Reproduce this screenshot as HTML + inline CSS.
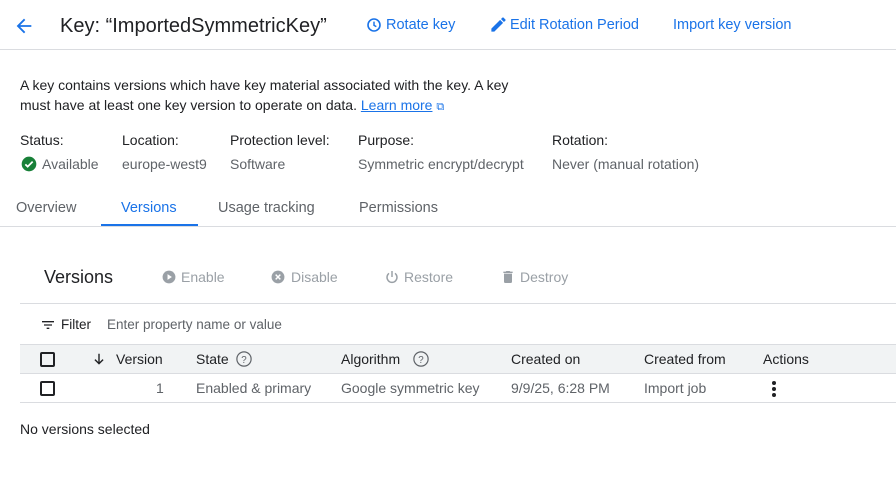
<!DOCTYPE html>
<html><head><style>
*{box-sizing:border-box;margin:0;padding:0}
body{width:896px;height:490px;background:#fff;font-family:"Liberation Sans",Arial,sans-serif;color:#202124;position:relative;overflow:hidden}
.a{position:absolute;white-space:nowrap}
.blue{color:#1a73e8}
.g{color:#5f6368}
.d{color:#9aa0a6}
.hl{position:absolute;height:1px;background:#dadce0}
.cb{position:absolute;width:15px;height:15px;border:2px solid #202124;border-radius:2px}
</style></head><body>
<svg class="a" style="left:13px;top:15px" width="22" height="22" viewBox="0 0 24 24"><path d="M20 11H7.83l5.59-5.59L12 4l-8 8 8 8 1.41-1.41L7.83 13H20v-2z" fill="#1a73e8"/></svg>
<div class="a" style="left:60px;top:15px;font-size:20px">Key: “ImportedSymmetricKey”</div>
<svg class="a" style="left:366px;top:17px" width="16" height="16" viewBox="0 0 24 24"><circle cx="12" cy="12" r="9" fill="none" stroke="#1a73e8" stroke-width="2.4"/><path d="M12 7v5.5l3.5 2" fill="none" stroke="#1a73e8" stroke-width="2.2"/></svg>
<div class="a blue" style="left:386px;top:17px;font-size:14.5px">Rotate key</div>
<svg class="a" style="left:489px;top:15px" width="19" height="19" viewBox="0 0 24 24"><path d="M3 17.25V21h3.75L17.81 9.94l-3.75-3.75L3 17.25zM20.71 7.04a1 1 0 000-1.41l-2.34-2.34a1 1 0 00-1.41 0l-1.83 1.83 3.75 3.75 1.83-1.83z" fill="#1a73e8"/></svg>
<div class="a blue" style="left:510px;top:17px;font-size:14.5px">Edit Rotation Period</div>
<div class="a blue" style="left:673px;top:17px;font-size:14.5px">Import key version</div>
<div class="hl" style="left:0;top:49px;width:896px"></div>
<div class="a" style="left:20px;top:75px;font-size:14px;line-height:20px">A key contains versions which have key material associated with the key. A key<br>must have at least one key version to operate on data. <span class="blue" style="text-decoration:underline">Learn more</span> <span class="blue" style="font-size:11px">&#x29C9;</span></div>
<div class="a" style="left:20px;top:132px;font-size:14px">Status:</div>
<div class="a" style="left:122px;top:132px;font-size:14px">Location:</div>
<div class="a" style="left:230px;top:132px;font-size:14px">Protection level:</div>
<div class="a" style="left:358px;top:132px;font-size:14px">Purpose:</div>
<div class="a" style="left:552px;top:132px;font-size:14px">Rotation:</div>
<svg class="a" style="left:21px;top:156px" width="16" height="16" viewBox="0 0 24 24"><circle cx="12" cy="12" r="11" fill="#188038"/><path d="M6.5 12.5l3.5 3.5 7.5-7.5" fill="none" stroke="#fff" stroke-width="2.6"/></svg>
<div class="a g" style="left:42px;top:156px;font-size:14px">Available</div>
<div class="a g" style="left:122px;top:156px;font-size:14px">europe-west9</div>
<div class="a g" style="left:230px;top:156px;font-size:14px">Software</div>
<div class="a g" style="left:358px;top:156px;font-size:14px">Symmetric encrypt/decrypt</div>
<div class="a g" style="left:552px;top:156px;font-size:14px">Never (manual rotation)</div>
<div class="a g" style="left:16px;top:200px;font-size:14.5px">Overview</div>
<div class="a blue" style="left:121px;top:200px;font-size:14.5px">Versions</div>
<div class="a g" style="left:218px;top:200px;font-size:14.5px">Usage tracking</div>
<div class="a g" style="left:359px;top:200px;font-size:14.5px">Permissions</div>
<div class="a" style="left:101px;top:224px;width:97px;height:3px;background:#1a73e8"></div>
<div class="hl" style="left:0;top:226px;width:896px"></div>
<div class="a" style="left:44px;top:267px;font-size:18px">Versions</div>
<svg class="a" style="left:162px;top:270px" width="14" height="14" viewBox="0 0 24 24"><circle cx="12" cy="12" r="11" fill="#9aa0a6"/><path d="M9.5 7v10l7.5-5z" fill="#fff"/></svg>
<div class="a d" style="left:181px;top:269px;font-size:14px">Enable</div>
<svg class="a" style="left:271px;top:270px" width="14" height="14" viewBox="0 0 24 24"><circle cx="12" cy="12" r="11" fill="#9aa0a6"/><path d="M8 8l8 8M16 8l-8 8" stroke="#fff" stroke-width="2.5"/></svg>
<div class="a d" style="left:291px;top:269px;font-size:14px">Disable</div>
<svg class="a" style="left:384px;top:269px" width="16" height="16" viewBox="0 0 24 24"><path d="M12 3v9" stroke="#9aa0a6" stroke-width="2.2"/><path d="M7.5 6.5a7.5 7.5 0 109 0" fill="none" stroke="#9aa0a6" stroke-width="2.2"/></svg>
<div class="a d" style="left:404px;top:269px;font-size:14px">Restore</div>
<svg class="a" style="left:500px;top:269px" width="16" height="16" viewBox="0 0 24 24"><path d="M6 19a2 2 0 002 2h8a2 2 0 002-2V7H6v12zM19 4h-3.5l-1-1h-5l-1 1H5v2h14V4z" fill="#9aa0a6"/></svg>
<div class="a d" style="left:520px;top:269px;font-size:14px">Destroy</div>
<div class="hl" style="left:20px;top:303px;width:876px"></div>
<svg class="a" style="left:40px;top:317px" width="16" height="16" viewBox="0 0 24 24"><path d="M3 6h18v2H3zM6 11h12v2H6zM10 16h4v2h-4z" fill="#202124"/></svg>
<div class="a" style="left:61px;top:317px;font-size:13.5px">Filter</div>
<div class="a g" style="left:107px;top:317px;font-size:13.5px">Enter property name or value</div>
<div class="a" style="left:20px;top:344px;width:876px;height:30px;background:#f1f3f4;border-top:1px solid #dadce0;border-bottom:1px solid #dadce0"></div>
<div class="cb" style="left:40px;top:352px"></div>
<svg class="a" style="left:92px;top:351px" width="14" height="16" viewBox="0 0 24 24"><path d="M12 3v17M5 13l7 7 7-7" fill="none" stroke="#202124" stroke-width="2.4"/></svg>
<div class="a" style="left:116px;top:351px;font-size:14px">Version</div>
<div class="a" style="left:196px;top:351px;font-size:14px">State</div>
<svg class="a" style="left:235px;top:350px" width="18" height="18" viewBox="0 0 24 24"><circle cx="12" cy="12" r="9.5" fill="none" stroke="#5f6368" stroke-width="1.6"/><text x="12" y="17" font-size="13" text-anchor="middle" fill="#5f6368" font-family="Liberation Sans">?</text></svg>
<div class="a" style="left:341px;top:351px;font-size:14px">Algorithm</div>
<svg class="a" style="left:412px;top:350px" width="18" height="18" viewBox="0 0 24 24"><circle cx="12" cy="12" r="9.5" fill="none" stroke="#5f6368" stroke-width="1.6"/><text x="12" y="17" font-size="13" text-anchor="middle" fill="#5f6368" font-family="Liberation Sans">?</text></svg>
<div class="a" style="left:511px;top:351px;font-size:14px">Created on</div>
<div class="a" style="left:644px;top:351px;font-size:14px">Created from</div>
<div class="a" style="left:763px;top:351px;font-size:14px">Actions</div>
<div class="cb" style="left:40px;top:381px"></div>
<div class="a g" style="left:156px;top:380px;font-size:14px">1</div>
<div class="a g" style="left:196px;top:380px;font-size:14px">Enabled &amp; primary</div>
<div class="a g" style="left:341px;top:380px;font-size:14px">Google symmetric key</div>
<div class="a g" style="left:511px;top:380px;font-size:14px">9/9/25, 6:28 PM</div>
<div class="a g" style="left:644px;top:380px;font-size:14px">Import job</div>
<svg class="a" style="left:770px;top:380px" width="8" height="18" viewBox="0 0 8 18"><circle cx="4" cy="3" r="2" fill="#202124"/><circle cx="4" cy="9" r="2" fill="#202124"/><circle cx="4" cy="15" r="2" fill="#202124"/></svg>
<div class="hl" style="left:20px;top:402px;width:876px"></div>
<div class="a" style="left:20px;top:421px;font-size:14px">No versions selected</div>
</body></html>
